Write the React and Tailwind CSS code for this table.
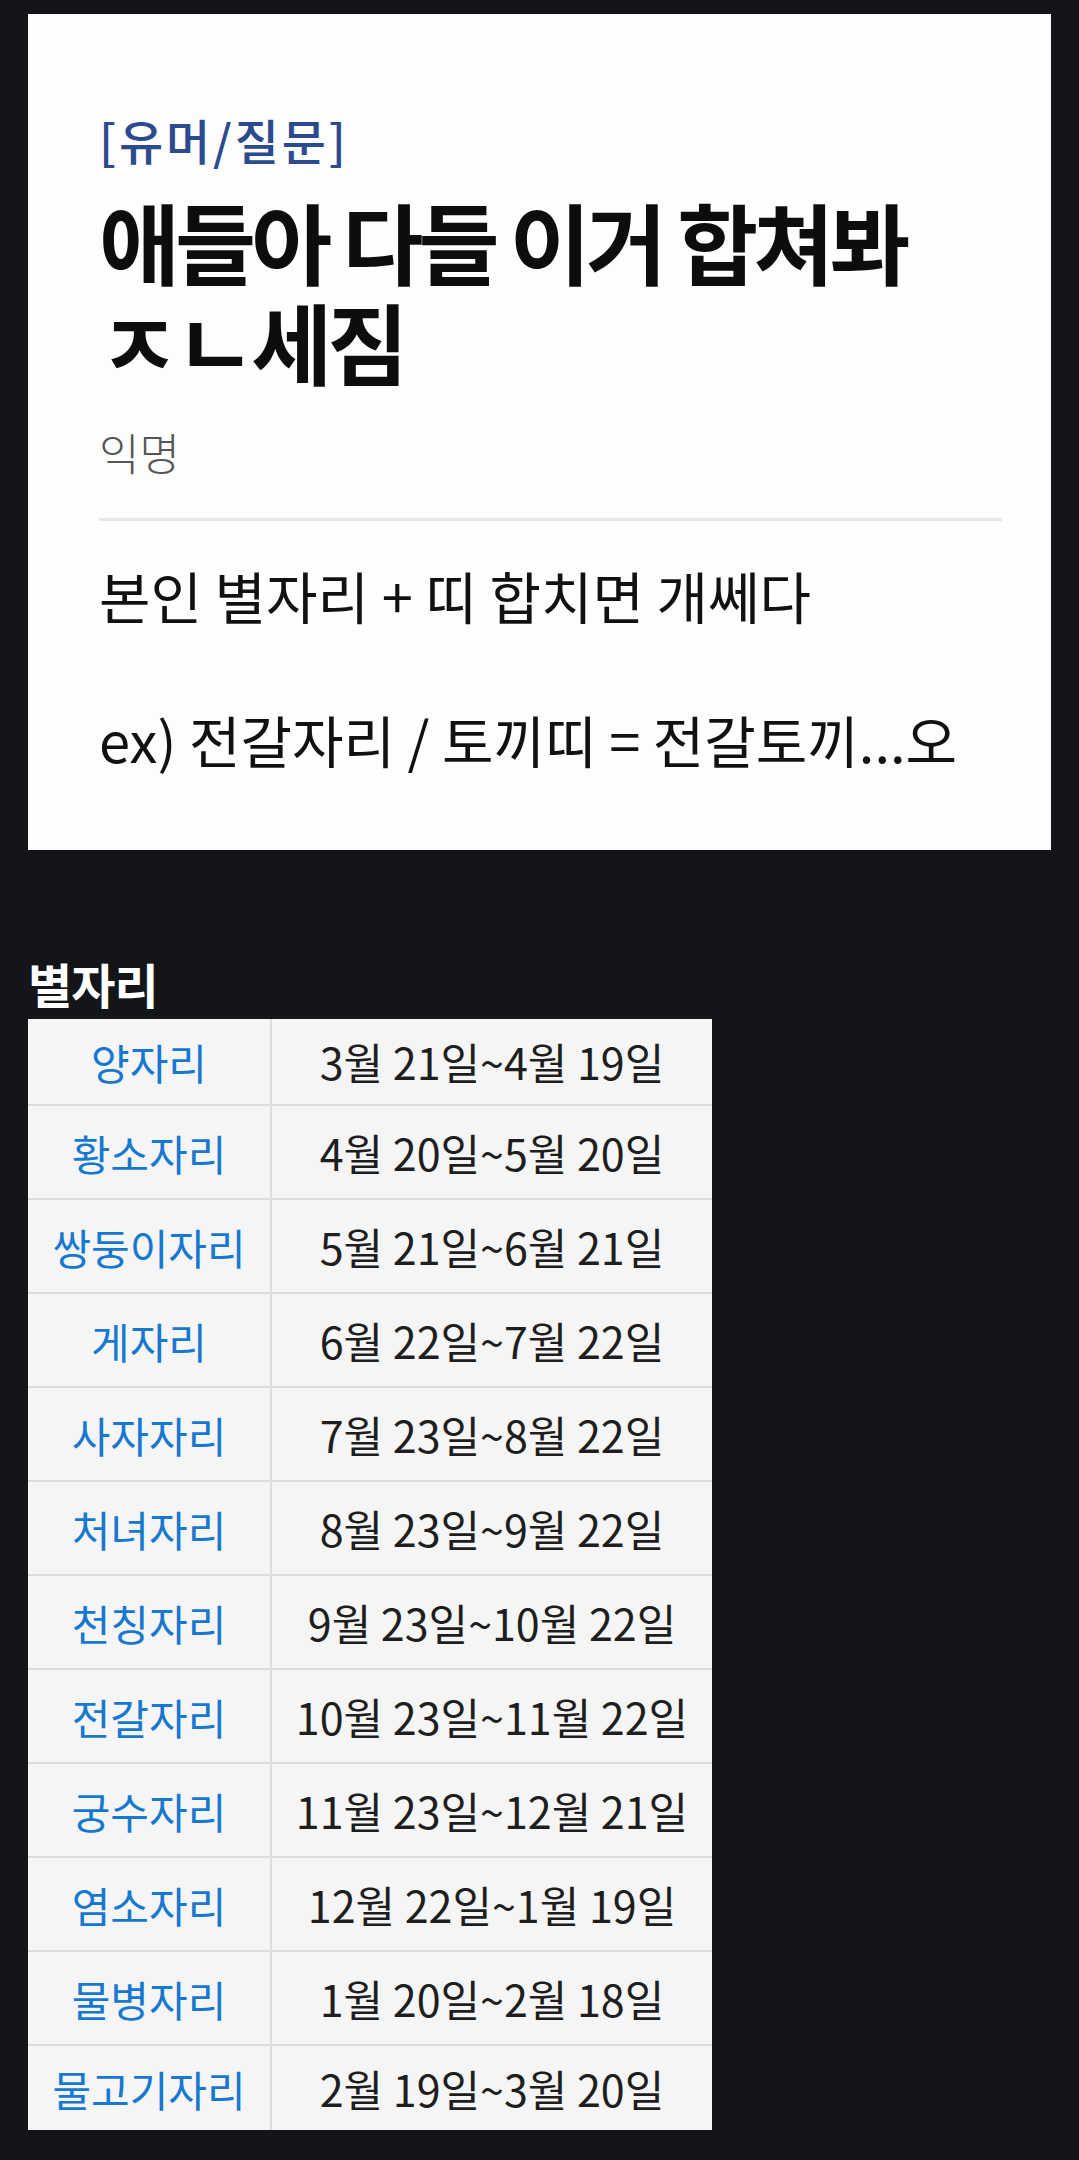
import React from 'react';

const signs = [
    { name: '양자리', range: '3월 21일~4월 19일' },
    { name: '황소자리', range: '4월 20일~5월 20일' },
    { name: '쌍둥이자리', range: '5월 21일~6월 21일' },
    { name: '게자리', range: '6월 22일~7월 22일' },
    { name: '사자자리', range: '7월 23일~8월 22일' },
    { name: '처녀자리', range: '8월 23일~9월 22일' },
    { name: '천칭자리', range: '9월 23일~10월 22일' },
    { name: '전갈자리', range: '10월 23일~11월 22일' },
    { name: '궁수자리', range: '11월 23일~12월 21일' },
    { name: '염소자리', range: '12월 22일~1월 19일' },
    { name: '물병자리', range: '1월 20일~2월 18일' },
    { name: '물고기자리', range: '2월 19일~3월 20일' }
];

const font = { fontFamily: '"Noto Sans CJK KR", "Noto Sans", sans-serif' };

const App = () => {
    return (
        <div className="min-h-[2160px] w-[1079px] bg-[#141518] pt-[14px]" style={font}>
            {/* post card */}
            <div className="mx-[28px] h-[836px] bg-[#fdfdfd] pl-[71px] pr-[49px] pt-[96px]">
                <p className="text-[48px] leading-[58px] text-[#2c4a8e] font-medium tracking-[0.06em]">[유머/질문]</p>
                <h1 className="mt-[22px] text-[88px] leading-[100px] font-bold text-[#0d0d0d] tracking-[-0.055em]">
                    애들아 다들 이거 합쳐봐
                    <br />
                    ㅈㄴ세짐
                </h1>
                <p className="mt-[36px] text-[44px] leading-[52px] text-[#555] font-light">익명</p>
                <div className="mt-[40px] h-[3px] bg-[#e6e6e6]" />
                <div className="mt-[38px] text-[56px] leading-[72px] text-[#111]">
                    <p>본인 별자리 + 띠 합치면 개쎄다</p>
                    <p>&nbsp;</p>
                    <p>ex) 전갈자리 / 토끼띠 = 전갈토끼...오</p>
                </div>
            </div>

            <h2 className="mt-[104px] ml-[28px] text-[48px] leading-[58px] font-bold text-white tracking-[-0.02em]">별자리</h2>

            <table className="mt-[7px] ml-[28px] w-[684px] border-collapse bg-[#f5f5f5]">
                <tbody>
                    {signs.map((s, i) => (
                        <tr
                            key={s.name}
                            className={
                                i === 0
                                    ? 'h-[86px]'
                                    : i === signs.length - 1
                                    ? 'h-[85px] border-t-2 border-[#dcdcdc]'
                                    : 'h-[94px] border-t-2 border-[#dcdcdc]'
                            }
                        >
                            <td className="w-[243px] border-r-2 border-[#dcdcdc] text-center text-[42px] text-[#1778cf]">
                                {s.name}
                            </td>
                            <td className="text-center text-[43px] text-[#1e1e1e]">{s.range}</td>
                        </tr>
                    ))}
                </tbody>
            </table>
        </div>
    );
};

export default App;
